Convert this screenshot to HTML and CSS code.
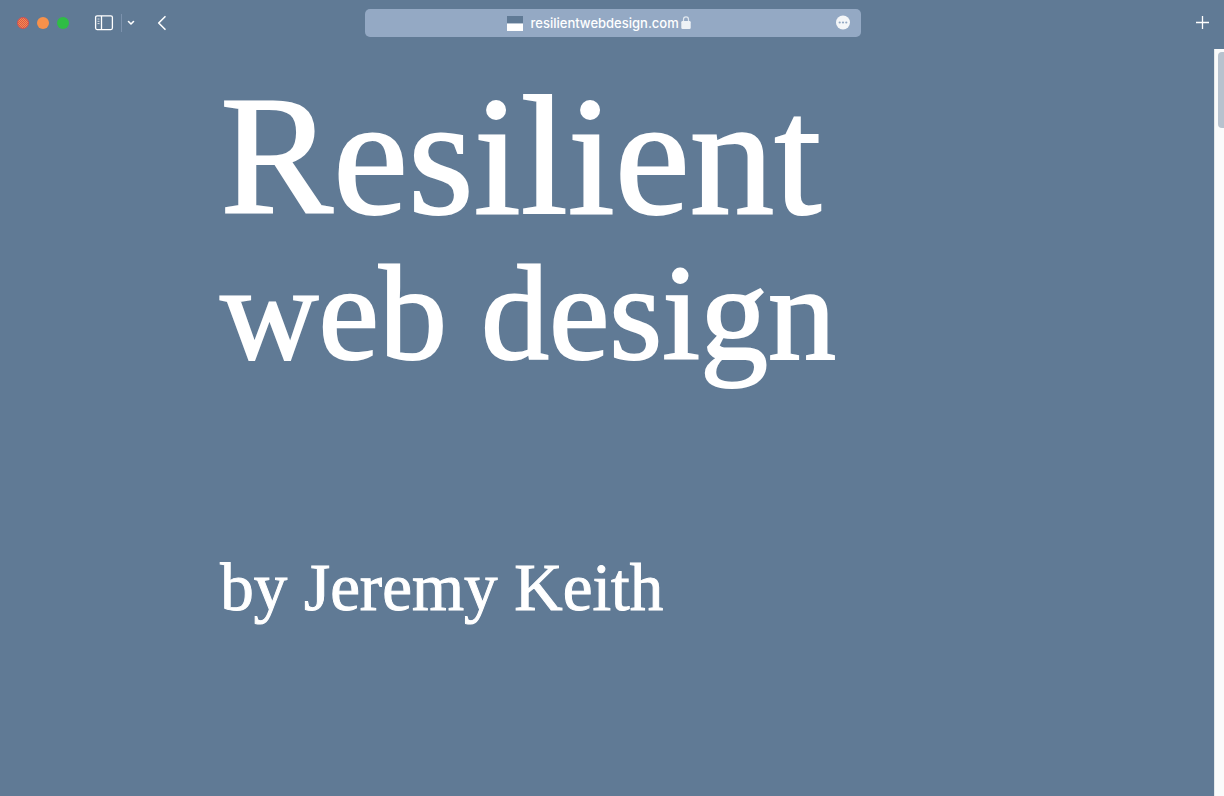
FILE: index.html
```html
<!DOCTYPE html>
<html lang="en">
<head>
<meta charset="utf-8">
<title>Resilient web design</title>
<link rel="stylesheet" href="styles.css">
</head>
<body>
<header class="toolbar">
  <div class="tools">
    <div class="lights">
      <button class="light close" aria-label="Close"></button>
      <button class="light minimise" aria-label="Minimise"></button>
      <button class="light expand" aria-label="Full screen"></button>
    </div>
    <button class="tool sidebar" aria-label="Sidebar">
      <svg width="20" height="18" viewBox="0 0 20 18" fill="none" stroke="#fff" stroke-width="1.3"><rect x="1.6" y="1.8" width="16.8" height="13.8" rx="1.5"/><path d="M7.5 2v13.500"/><path d="M3.500 5h2M3.500 7.300h2M3.500 9.600h2" stroke-width="1" opacity=".75"/></svg>
    </button>
    <span class="divider"></span>
    <button class="tool menu" aria-label="Sidebar menu">
      <svg width="8" height="6" viewBox="0 0 8 6" fill="none" stroke="#fff" stroke-width="1.6" stroke-linecap="round" stroke-linejoin="round"><path d="M1.500 1.500 4 4l2.500-2.500"/></svg>
    </button>
    <button class="tool back" aria-label="Back">
      <svg width="10" height="16" viewBox="0 0 10 16" fill="none" stroke="#fff" stroke-width="1.6" stroke-linecap="round" stroke-linejoin="round"><path d="M8 1.700 1.700 8 8 14.300"/></svg>
    </button>
  </div>
  <div class="address">
    <span class="favicon"></span>
    <input class="url" type="text" aria-label="Address" value="resilientwebdesign.com">
    <svg class="lock" width="10" height="14" viewBox="0 0 10 14"><path d="M2.500 7V3.500a2.500 2.700 0 0 1 5 0V7" fill="none" stroke="#e2e8ef" stroke-width="1.200"/><rect x=".3" y="5" width="9.400" height="8" rx="1.200" fill="#eef2f6"/></svg>
    <button class="more" aria-label="Page menu">
      <svg width="14" height="14" viewBox="0 0 14 14"><circle cx="7" cy="6.500" r="7" fill="#f4f6f8"/><g fill="#94a9c4"><circle cx="3.700" cy="6.500" r="1.100"/><circle cx="7" cy="6.500" r="1.100"/><circle cx="10.300" cy="6.500" r="1.100"/></g></svg>
    </button>
  </div>
  <button class="tool add" aria-label="New tab">
    <svg width="14" height="14" viewBox="0 0 14 14" stroke="#fff" stroke-width="1.300"><path d="M7.500 0v13M1 6.500h13"/></svg>
  </button>
</header>
<div class="viewport">
  <main class="cover">
    <h1 class="title"><span class="title-lead">Resilient</span> <span class="title-rest">web design</span></h1>
    <p class="author">by Jeremy Keith</p>
  </main>
  <div class="scrollbar"><div class="thumb"></div></div>
</div>
</body>
</html>
```

FILE: styles.css
```css
* { box-sizing: border-box; }

body {
  margin: 0;
  min-height: 100vh;
  display: flex;
  flex-direction: column;
  background: #607a95;
  color: #fff;
  font-family: "Liberation Serif", serif;
}

button {
  padding: 0;
  border: 0;
  background: none;
  color: inherit;
}

svg {
  display: block;
  overflow: visible;
}

.toolbar {
  display: grid;
  grid-template-columns: 1fr minmax(0, 496px) 1fr;
  align-items: center;
  padding: 9px 15px 12px 17px;
}

.tools, .lights {
  display: flex;
  align-items: center;
}

.lights { gap: 8px; }

.light {
  width: 12px;
  height: 12px;
  border-radius: 50%;
}

.close {
  border: 1px solid #d2524f;
  background: repeating-conic-gradient(#f7914b 0 25%, #d9544d 0 50%) 0 0 / 2px 2px;
}

.minimise { background: #f7914b; }
.expand { background: #2fbd45; }

.sidebar { margin-left: 25px; }

.divider {
  width: 1px;
  height: 18px;
  margin: 0 5px 0 7px;
  background: #7c92ad;
}

.back { margin-left: 22px; }

.address {
  display: flex;
  align-items: center;
  justify-content: center;
  height: 28px;
  padding: 0 11px 0 0;
  border-radius: 5px;
  background: #94a9c4;
}

.favicon {
  width: 16px;
  height: 15px;
  margin-left: auto;
  border-top: 7px solid #607a95;
  border-bottom: 7px solid #fff;
  background: #b9c5d3;
}

.url {
  width: 150px;
  padding: 0;
  margin-left: 8px;
  border: 0;
  background: none;
  color: #fff;
  font: 500 13px/18px Inter, sans-serif;
}

.lock { margin-right: 4px; }

.more { margin-left: auto; }

.add { justify-self: end; }

.viewport {
  flex: 1;
  display: flex;
}

.cover {
  flex: 1;
  padding: 23px 0 0 18%;
}

.title {
  margin: 0;
  font-weight: 400;
  -webkit-text-stroke: 2px #fff;
}

.title-lead, .title-rest { display: block; }

.title-lead {
  font-size: 169px;
  line-height: 168px;
}

.title-rest {
  font-size: 136px;
  line-height: 146px;
}

.author {
  margin: 161px 0 0;
  font-size: 67px;
  line-height: 80px;
  -webkit-text-stroke: 1px #fff;
}

.scrollbar {
  width: 10px;
  padding: 3px 0 0 3px;
  background: #fafbfb;
  border-left: 1px solid #e4e8ea;
}

.thumb {
  height: 76px;
  border-radius: 4px 0 0 4px;
  background: #b7c2ce;
}
```
